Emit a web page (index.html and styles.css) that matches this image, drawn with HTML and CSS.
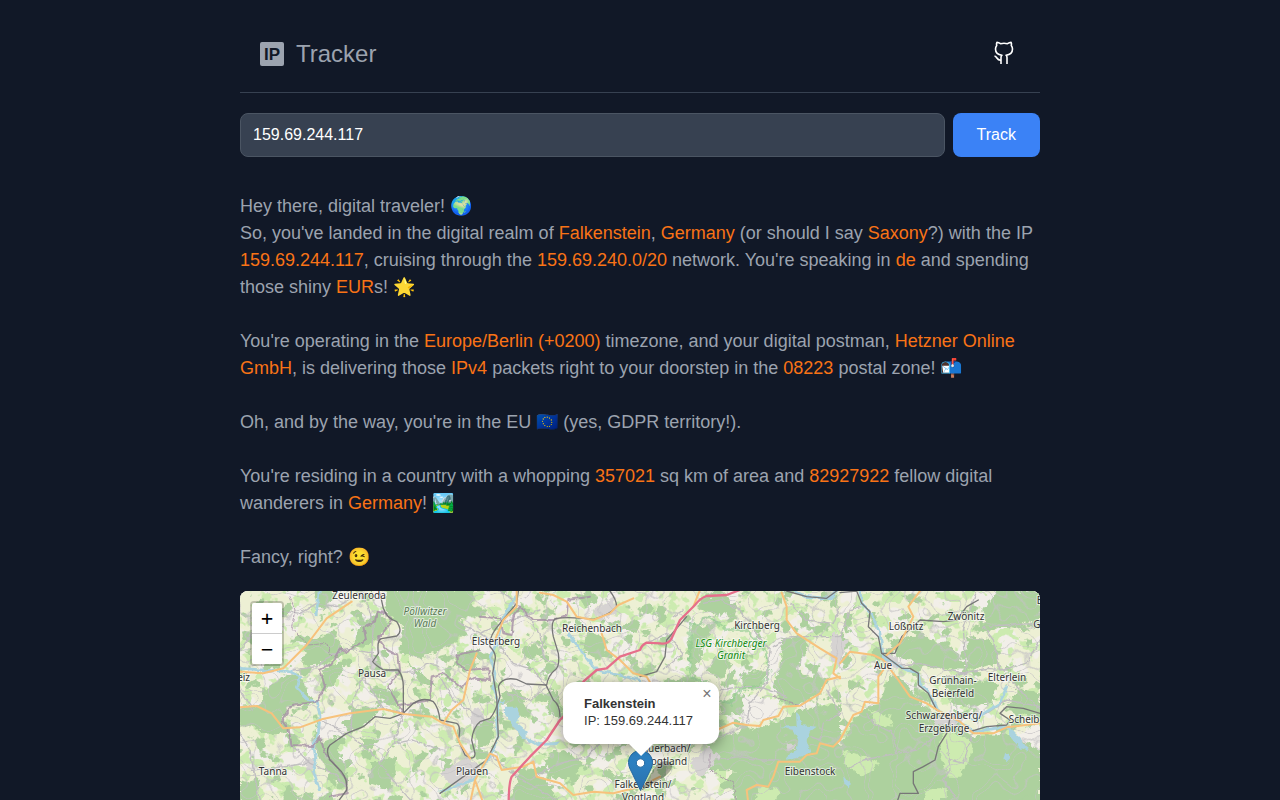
FILE: index.html
```
<!DOCTYPE html>
<html lang="en">

<head>
    <meta charset="UTF-8">
    <meta name="viewport" content="width=device-width, initial-scale=1.0">
    <title>IP Tracker</title>
    <link rel="stylesheet" href="styles.css">
</head>

<body>
    <div class="container">
        <header class="header">
            <h1 class="brand">
                <svg class="brand-icon" viewBox="0 0 24 24" role="img" aria-label="IP">
                    <rect width="24" height="24" rx="2" />
                    <text x="12" y="18">IP</text>
                </svg>
                Tracker
            </h1>
            <a class="github" href="#" aria-label="GitHub">
                <svg viewBox="0 0 24 24">
                    <path d="M9 23v-6.500c0-1 .4-1.800 1-2.300-4.500-.4-6.500-2.500-6.500-6.200 0-1.500.5-2.700 1.200-3.600-.3-1-.3-2.100.2-3 1.500.1 2.700.7 3.600 1.300 2.300-.5 4.700-.5 7 0 .9-.6 2.100-1.200 3.600-1.300.5.9.5 2 .2 3 .7.9 1.200 2.100 1.200 3.600 0 3.700-2 5.800-6.500 6.200.6.5 1 1.300 1 2.300V23M9 19.200c-4.500.6-3.500-3.700-6.500-4.200" />
                </svg>
            </a>
        </header>

        <form class="search">
            <input type="text" class="search-input" value="159.69.244.117" aria-label="IP address">
            <button type="button" class="search-button">Track</button>
        </form>

        <div class="story">
            <p>Hey there, digital traveler! 🌍<br>
                So, you've landed in the digital realm of <span>Falkenstein</span>, <span>Germany</span> (or should I say <span>Saxony</span>?) with the IP <span>159.69.244.117</span>, cruising through the <span>159.69.240.0/20</span> network. You're speaking in <span>de</span> and spending those shiny <span>EUR</span>s! 🌟</p>
            <p>You're operating in the <span>Europe/Berlin (+0200)</span> timezone, and your digital postman, <span>Hetzner Online GmbH</span>, is delivering those <span>IPv4</span> packets right to your doorstep in the <span>08223</span> postal zone! 📬</p>
            <p>Oh, and by the way, you're in the EU 🇪🇺 (yes, GDPR territory!).</p>
            <p>You're residing in a country with a whopping <span>357021</span> sq km of area and <span>82927922</span> fellow digital wanderers in <span>Germany</span>! 🏞️</p>
            <p>Fancy, right? 😉</p>
        </div>

        <div class="map">
            <svg class="map-tiles" viewBox="0 0 800 400" preserveAspectRatio="xMidYMid slice">
                <defs>
                    <filter id="fields" x="0" y="0" width="100%" height="100%" color-interpolation-filters="sRGB">
                        <feTurbulence type="fractalNoise" baseFrequency="0.045" numOctaves="3" seed="8" />
                        <feColorMatrix values="0 0 0 0 .93  0 0 0 0 .94  0 0 0 0 .83  16 0 0 0 -6.6" />
                    </filter>
                    <filter id="meadows" x="0" y="0" width="100%" height="100%" color-interpolation-filters="sRGB">
                        <feTurbulence type="fractalNoise" baseFrequency="0.08" numOctaves="3" seed="21" />
                        <feColorMatrix values="0 0 0 0 .80  0 0 0 0 .92  0 0 0 0 .69  0 14 0 0 -7.8" />
                    </filter>
                    <filter id="groves" x="0" y="0" width="100%" height="100%" color-interpolation-filters="sRGB">
                        <feTurbulence type="fractalNoise" baseFrequency="0.07" numOctaves="4" seed="33" />
                        <feColorMatrix values="0 0 0 0 .68  0 0 0 0 .82  0 0 0 0 .62  0 0 18 0 -10.8" />
                    </filter>
                    <filter id="lanes" x="0" y="0" width="100%" height="100%" color-interpolation-filters="sRGB">
                        <feTurbulence type="fractalNoise" baseFrequency="0.035" numOctaves="2" seed="5" />
                        <feColorMatrix values="0 0 0 0 .77  0 0 0 0 .76  0 0 0 0 .77  1 0 0 0 0" />
                        <feComponentTransfer>
                            <feFuncA type="table" tableValues="0 0 0 0 0 0 0 0 0 0 0 0 0 0 0 0 0 0 0 0 0 0 0 .7 0 0 0 0 0 0 .7 0 0 0 0 0 0 0 0 0 0 0 0 0 0 0 0 0 0 0 0 0 0" />
                        </feComponentTransfer>
                    </filter>
                    <filter id="rough" x="-5%" y="-5%" width="110%" height="110%" color-interpolation-filters="sRGB">
                        <feTurbulence type="fractalNoise" baseFrequency="0.06" numOctaves="3" seed="3" />
                        <feDisplacementMap in="SourceGraphic" scale="24" xChannelSelector="R" yChannelSelector="G" />
                    </filter>
                    <filter id="wobble" x="-5%" y="-5%" width="110%" height="110%" color-interpolation-filters="sRGB">
                        <feTurbulence type="fractalNoise" baseFrequency="0.06" numOctaves="2" seed="11" />
                        <feDisplacementMap in="SourceGraphic" scale="12" xChannelSelector="R" yChannelSelector="G" />
                    </filter>
                    <linearGradient id="pin" x1="0" y1="0" x2="0" y2="1">
                        <stop offset="0" stop-color="#2e86c9" />
                        <stop offset="1" stop-color="#2a72ad" />
                    </linearGradient>
                </defs>

                <!-- land cover -->
                <rect class="land" width="800" height="400" />
                <rect width="800" height="400" filter="url(#fields)" />
                <rect width="800" height="400" filter="url(#meadows)" />
                <rect width="800" height="400" filter="url(#groves)" />

                <g transform="translate(0 -1) scale(.333333)">
                    <g class="sand" filter="url(#rough)">
                        <path d="M240 370L330 360L400 400L240 450L230 420ZM800 210L860 230L900 270L860 310L790 280ZM1500 310L1620 330L1600 390L1500 400ZM2330 430L2400 400V500L2350 470ZM1590 170L1630 160L1610 240L1570 290Z" />
                    </g>
                    <g class="forest" filter="url(#rough)">
                        <path d="M85 290L130 260L175 250L195 290L225 340L150 350L125 390L145 420L100 435L0 400V350L60 345Z" />
                        <path d="M200 150L270 130L305 165L310 195L260 220L185 230ZM230 3H290L260 60L235 50ZM250 240L330 200L280 290L240 310Z" />
                        <path d="M370 100L410 65L450 100L410 150L330 180ZM440 0H700V70L640 100L600 180L540 205L480 190L490 110L440 70Z" />
                        <path d="M220 470L290 440L300 500L330 580L300 600L250 520ZM300 400L390 350L420 360L350 430ZM360 440L420 450L380 490ZM390 520L470 500L450 600L390 580ZM500 210L590 290L540 280ZM420 290L480 310L470 350L420 330ZM0 570L50 590L60 640H0Z" />
                        <path d="M600 100L670 90L680 130L630 165L600 180ZM650 190L720 175L700 230L640 230ZM840 180L890 160L910 190L860 210ZM700 400L765 380L760 450L715 480ZM780 310L840 300L870 380L820 380ZM910 310L950 300L970 390L930 370Z" />
                        <path d="M910 505L970 480L1030 520L1000 560L940 570ZM1040 120L1100 150L1080 210L1030 180ZM1120 110L1200 90L1190 130ZM1080 540L1170 560L1120 580ZM840 530L920 570L960 640H810ZM1010 10L1070 20L1040 60Z" />
                        <path d="M1380 30L1450 10L1490 50L1430 80L1390 60ZM1360 100L1410 120L1390 180L1360 260L1345 200ZM1430 200L1480 220L1440 270L1400 240ZM1500 250L1580 240L1560 290L1510 300Z" />
                        <path d="M1630 145L1680 135L1705 170L1670 240L1730 270L1770 260L1740 310L1680 345L1620 335L1600 280L1620 240Z" />
                        <path d="M1440 340L1510 310V370L1450 375ZM1440 440L1520 420L1630 390L1680 360L1800 340V640H1480V540L1410 540L1400 480Z" />
                        <path d="M2270 0L2400 3V90L2240 120L2230 60ZM1950 150L2060 140L2140 180L2190 240L2080 235L1970 200ZM2180 140L2250 150L2280 220L2180 240Z" />
                        <path d="M1950 250L2000 280L2050 350L2110 380L2200 440L2300 430L2400 480V640H1800V470L1860 360L1920 340ZM2110 260L2270 280L2260 340L2140 350ZM2330 300L2400 310V390L2300 360Z" />
                        <path d="M1780 900L2400 600V1260H1500V620ZM100 760L500 700L620 900L300 1000ZM700 800L1100 760L1200 1100L800 1200Z" />
                    </g>

                    <!-- clearings in the Erzgebirge forests -->
                    <g class="clearing" filter="url(#rough)">
                        <path d="M2110 420L2190 450L2200 490L2160 560L2120 560L2100 480ZM1810 480L1880 500L1920 520L1870 560L1810 520ZM1890 360L1950 380L1960 410L1900 400ZM2060 600L2120 590L2120 630H2050ZM1560 590L1620 600L1600 640H1540Z" />
                    </g>
                    <g class="built" filter="url(#rough)">
                        <path d="M690 370L720 350L730 390L700 420ZM600 550L680 500L730 540L650 600ZM1060 60L1120 20L1130 70L1080 90ZM1780 130L1820 150L1800 240L1770 200ZM1930 190L1970 200L1990 240L1950 230ZM2070 390L2150 370L2170 400L2100 410ZM390 180L410 210L400 240L385 220ZM195 500L225 510L220 545L195 530ZM1400 470L1440 500L1380 560L1350 520ZM1640 460L1670 465L1665 480L1640 480Z" />
                    </g>
                </g>

                <rect width="800" height="400" filter="url(#lanes)" />

                <g class="lines" transform="translate(0 -1) scale(.333333)">
                    <!-- Kirchberger Granit reserve outline -->
                    <path class="reserve" filter="url(#rough)" d="M1350 100Q1380 110 1390 90T1460 120L1510 115L1570 170L1590 250L1560 290L1500 300L1470 340L1430 330L1400 280L1350 260Z" />

                    <g class="minor" filter="url(#wobble)">
                        <path d="M0 180L30 140L60 80L110 60L180 70L230 40L290 50L330 30" />
                        <path d="M0 300L40 360M0 430L30 480L40 540L60 640M160 240L230 230L260 205L320 175L400 190" />
                        <path d="M360 10L385 50L400 100L395 200L430 240L480 240M450 240L520 250L560 220L600 230M370 260L340 330L332 430M370 260L430 355L490 370" />
                        <path d="M150 460L210 520L280 550L320 590M200 520L30 545M245 390L330 440L390 480L450 560L520 640M460 460L520 450L600 480M490 370L460 460L420 520" />
                        <path d="M720 130L780 170L820 220L880 240L920 290M660 100L720 130L810 90L900 60M920 290L870 330L800 310M780 0L840 50L900 130L910 200L980 240" />
                        <path d="M880 560L960 520L1040 500L1100 440L1180 460M760 500L830 560L900 600L960 640M600 260L640 330L700 370L760 400M1000 280L1060 320L1130 360" />
                        <path d="M1220 160L1280 130L1330 190L1270 240M1300 80L1330 60M1390 40L1440 30L1500 60L1540 120L1590 180L1580 280L1530 340L1520 400" />
                        <path d="M1440 300L1500 290L1560 290L1640 320M1430 510L1500 500L1560 510L1620 510M1300 480L1360 460L1440 440L1520 405M1650 40L1700 90L1780 100L1800 50" />
                        <path d="M1600 170L1640 145L1680 140L1800 140M1800 140L1830 60L1860 50M1760 300L1800 370L1750 400L1740 450L1710 440" />
                        <path d="M1980 225L2040 220L2120 240L2180 250L2170 120L2190 60L2210 3M2230 110L2300 105L2400 100M2230 110L2260 150L2280 240L2360 220L2400 150M2300 260L2340 300L2400 360" />
                        <path d="M2180 250L2120 260L2240 235L2300 240M1880 370L1900 400L1960 430L1970 490L2030 480L2100 430M1970 490L1870 510L1820 540M2120 450L2130 540L2110 570L2160 640M2200 420L2170 520L2130 510M2100 380L2240 370L2300 330L2400 350" />
                    </g>

                    <g class="water" filter="url(#wobble)">
                        <path class="river" d="M238 3L228 75M0 235L70 240L150 245L180 260L172 295L205 330L232 335L240 380L235 430L220 460L228 510L220 540L238 600M830 20L790 80L770 160L750 200L765 250L760 290L775 330L770 400L775 440L750 500L700 570L600 605M985 130L1030 190L1070 240L1200 270M1655 0L1700 20L1770 25L1790 3" />
                        <path class="river" d="M1860 3L1865 40L1895 75L1920 130L1930 200L2000 240L2035 250L2040 280L2070 310L2090 360L2140 385L2200 425L2300 410L2340 450L2360 480M2200 390L2280 340L2300 290" />
                        <path class="lake" d="M795 350L830 350L840 380L830 400L860 425L860 445L900 460L960 455L950 465L890 468L850 445L820 410L795 370ZM775 335L795 330L790 345Z" />
                        <path class="lake" d="M1668 365L1680 385L1685 405L1730 410L1710 425L1700 450L1712 490L1680 500L1640 512L1650 490L1670 480L1675 450L1660 420L1620 410L1670 408Z" />
                        <path class="lake" d="M2295 490L2310 488L2310 505L2300 516L2290 510ZM1810 560L1832 580L1830 595L1812 580ZM2300 415L2330 440L2360 480L2340 475L2310 440Z" />
                    </g>

                    <!-- state borders -->
                    <g class="border" filter="url(#wobble)">
                        <path d="M410 65L440 70L455 95L415 145L440 180L475 195L480 240L445 290L475 345L490 370M410 65L405 95L370 110L378 150L315 185L300 175L275 220L240 240L255 290L230 335L155 345L125 390L145 420L155 465L220 468L240 440L255 490L290 530L320 570L320 610L270 620" />
                        <path d="M475 345L520 340L570 330L575 260L610 250L665 295L690 265L750 270L745 235L680 240L650 220L650 195L720 180M720 80L780 85L790 130L815 135L820 80L840 50L880 90L940 90L980 75L985 30L1050 20" />
                        <path class="thin" d="M150 20L165 60L155 110L190 150L205 165L260 160L275 200M1600 320L1680 345L1690 350M1410 490L1410 540L1480 580L1490 640" />
                    </g>

                    <g class="rail">
                        <path d="M420 10L430 55Q440 85 470 95Q490 125 470 138L425 146Q410 150 415 190L398 215Q405 225 430 240L475 240Q490 260 490 290V370L450 385L405 380L370 410L320 430L270 465Q255 480 270 510L290 530Q325 560 320 600L290 640" />
                        <path d="M490 370L520 340Q550 320 580 335Q595 350 600 390L650 400Q665 410 655 450L675 495Q705 515 705 490L695 450Q700 410 720 395L750 385Q765 370 780 320L775 290Q785 260 830 268L860 282L920 285Q925 255 945 240Q960 230 955 190L940 140Q930 90 950 85Q990 80 1060 88Q1110 75 1130 50Q1130 30 1110 3" />
                        <path d="M918 285L940 330Q960 345 960 380M835 3L830 40L780 100Q745 140 750 170Q770 190 765 210L758 250L770 320L775 440L740 510L600 610" />
                        <path d="M1200 260L1250 245L1275 200L1280 150L1340 80M1640 3L1700 20L1760 25L1790 3M1800 8L1850 3L1865 40L1890 65L1885 110L1915 140L1925 190L1965 190L1985 140L2040 90L2110 95L2150 90L2180 50L2215 30" />
                        <path d="M1925 190L1985 235L2010 235L2035 250L2035 285L2065 310L2090 360L2130 385L2120 430L2095 470L2085 510L2050 530L2020 545L2020 580L2035 610L1980 610L1970 640M2190 425L2240 410L2300 405L2310 390L2280 370L2300 350L2350 355L2400 370" />
                    </g>

                    <g class="road">
                        <path d="M335 35L260 85L200 165L155 210L130 235L70 250L0 245M0 352L50 348L95 370L130 415L180 412L245 388L330 370L430 357L492 372L575 380L610 400L640 410L660 460L690 505M610 400L635 360L670 330L690 240L710 190" />
                        <path d="M830 3L830 50L790 90L765 150M900 8L940 15L980 35L1010 80L1060 90L1110 70L1135 45L1180 25M1085 130L1100 180L1140 210L1180 250L1220 260L1250 310" />
                        <path d="M690 640L705 570L750 490L770 500L785 540L850 530L880 515L890 560L960 580L1000 615L1060 605L1120 610L1200 590L1260 560M705 570L730 640" />
                        <path d="M1380 0L1360 50M1430 420L1480 398L1520 405L1560 408L1570 390L1615 378L1630 350L1680 347L1740 310L1760 270L1800 260M1625 8L1640 50L1640 90L1670 130L1740 175L1790 205L1780 250L1800 265" />
                        <path d="M1800 220L1830 185L1900 195L1930 210L1975 270L2010 320L2060 340L2100 365L2160 395L2200 430L2260 430L2300 412L2400 400M2040 3L2005 50L2020 80L1980 160L1940 195M1930 240L1915 260V340L1875 335L1865 365L1840 375L1800 450" />
                        <path d="M1800 450L1780 470L1740 460L1730 490L1700 495L1680 515L1615 515L1600 560L1585 590L1550 585L1520 600L1525 640" />
                    </g>

                    <path class="motorway" d="M1500 0L1460 15L1400 18Q1380 25 1365 45L1320 90L1295 145Q1285 165 1260 160L1220 158Q1205 165 1200 180L1140 200L1100 235L1070 240L1030 275Q1005 310 1000 350L960 390L920 450L870 500L815 560Q805 580 806 660" />
                </g>

                <g class="labels">
                    <text x="119" y="8">Zeulenroda</text>
                    <text class="nature muted" x="185" y="24">Pöllwitzer<tspan x="185" dy="12">Wald</tspan></text>
                    <text x="256" y="54">Elsterberg</text>
                    <text x="352" y="41">Reichenbach</text>
                    <text x="132" y="86">Pausa</text>
                    <text x="-2" y="90">Greiz</text>
                    <text x="33" y="184">Tanna</text>
                    <text x="232" y="184">Plauen</text>
                    <text x="517" y="38">Kirchberg</text>
                    <text class="nature" x="491" y="56">LSG Kirchberger<tspan x="491" dy="12">Granit</tspan></text>
                    <text x="426" y="161">Auerbach/<tspan x="426" dy="13">Vogtland</tspan></text>
                    <text x="403" y="197">Falkenstein/<tspan x="403" dy="13">Vogtland</tspan></text>
                    <text x="570" y="184">Eibenstock</text>
                    <text x="666" y="39">Lößnitz</text>
                    <text x="726" y="29">Zwönitz</text>
                    <text x="643" y="78">Aue</text>
                    <text x="713" y="93">Grünhain-<tspan x="713" dy="13">Beierfeld</tspan></text>
                    <text x="767" y="90">Elterlein</text>
                    <text x="704" y="128">Schwarzenberg/<tspan x="704" dy="13">Erzgebirge</tspan></text>
                    <text x="801" y="132">Scheibenberg</text>
                    <text x="830" y="13">Ehrenfrieders.</text>
                    <text x="807" y="37">Geyer</text>
                </g>
            </svg>

            <div class="zoom">
                <button type="button" aria-label="Zoom in">+</button>
                <button type="button" aria-label="Zoom out">−</button>
            </div>

            <svg class="marker" viewBox="0 0 50 41">
                <path class="marker-shadow" d="M13 41L25 20Q32 8 42 12Q48 18 36 27Z" />
                <path class="marker-pin" fill="url(#pin)" d="M12.500 .5C6 .5.5 5.800.5 12.500c0 3 1.200 6 2.700 8.700L12.500 40.500l9.300-19.300c1.500-2.700 2.700-5.700 2.700-8.700C24.500 5.800 19 .5 12.500.5Z" />
                <circle cx="12.500" cy="13" r="4.200" />
            </svg>

            <div class="popup">
                <div class="popup-content">
                    <b>Falkenstein</b><br>IP: 159.69.244.117
                </div>
                <button type="button" class="popup-close" aria-label="Close popup">×</button>
            </div>
        </div>
    </div>
</body>

</html>
```
FILE: styles.css
```
* {
    box-sizing: border-box;
}

body {
    margin: 0;
    background-color: #111827;
    color: #9ca3af;
    font-family: "Liberation Sans", Arial, sans-serif;
    font-size: 16px;
}

.container {
    max-width: 800px;
    margin: 0 auto;
    padding-top: 16px;
}

/* Header */
.header {
    display: flex;
    justify-content: space-between;
    align-items: center;
    padding: 20px 24px 20px 20px;
    border-bottom: 1px solid #374151;
}

.brand {
    display: flex;
    align-items: center;
    gap: 12px;
    margin: 0;
    font-size: 24px;
    font-weight: normal;
    line-height: 36px;
}

.brand-icon {
    width: 24px;
    height: 24px;
    fill: #9ca3af;
}

.brand-icon text {
    fill: #111827;
    font-size: 17px;
    font-weight: bold;
    text-anchor: middle;
}

.github {
    display: flex;
}

.github svg {
    width: 24px;
    height: 24px;
    margin-bottom: 2px;
    fill: none;
    stroke: #fff;
    stroke-width: 1.6;
    stroke-linejoin: round;
}

/* Search form */
.search {
    display: flex;
    gap: 8px;
    margin: 20px 0 36px;
}

.search-input {
    flex: 1;
    min-width: 0;
    height: 44px;
    padding: 0 12px;
    border: 1px solid #4b5563;
    border-radius: 8px;
    background-color: #374151;
    color: #fff;
    font: inherit;
}

.search-button {
    padding: 0 24px;
    border: none;
    border-radius: 8px;
    background-color: #3b82f6;
    color: #fff;
    font: inherit;
    cursor: pointer;
}

/* Story text */
.story {
    margin-bottom: 20px;
    font-size: 18px;
    line-height: 27px;
}

.story p {
    margin: 0 0 27px;
}

.story p:last-child {
    margin-bottom: 0;
}

.story span {
    color: #f97316;
}

/* Map */
.map {
    position: relative;
    height: 400px;
    overflow: hidden;
    border-radius: 8px;
    background-color: #f2efe9;
}

.map-tiles {
    display: block;
    width: 100%;
    height: 100%;
}

.land {
    fill: #f2efe9;
}

.forest {
    fill: #add19e;
}

.clearing {
    fill: #cdebb0;
}

.built {
    fill: #d6d3d2;
}

.sand {
    fill: #f2efe9;
}

.lines {
    fill: none;
    stroke-linejoin: round;
    stroke-linecap: round;
}

.reserve {
    stroke: #8fcb8f;
    stroke-width: 9;
    opacity: .6;
}

.minor {
    stroke: #c0bec0;
    stroke-width: 4;
}

.river {
    stroke: #aad3df;
    stroke-width: 8;
}

.lake {
    fill: #aad3df;
}

.border {
    stroke: #a58fa5;
    stroke-width: 6;
    opacity: .8;
}

.thin {
    stroke-width: 3;
    stroke-dasharray: 12 5;
}

.rail {
    stroke: #777;
    stroke-width: 4;
}

.road {
    stroke: #f7c27c;
    stroke-width: 6;
}

.motorway {
    stroke: #e66f8b;
    stroke-width: 7;
}

.labels {
    fill: #333;
    stroke: #fff;
    stroke-opacity: .6;
    stroke-width: 2;
    stroke-linejoin: round;
    paint-order: stroke;
    font-family: "Noto Sans", sans-serif;
    font-size: 10px;
    text-anchor: middle;
}

.nature {
    fill: #128a12;
    font-style: italic;
}

.muted {
    fill: #5a7a55;
}

.zoom {
    position: absolute;
    top: 10px;
    left: 10px;
    display: flex;
    flex-direction: column;
    border: 2px solid rgba(0, 0, 0, .2);
    border-radius: 4px;
    background-clip: padding-box;
}

.zoom button {
    width: 30px;
    height: 30px;
    padding: 0;
    border: none;
    border-radius: 0 0 2px 2px;
    background-color: #fff;
    color: #000;
    font: 20px/30px "DejaVu Sans Mono", monospace;
    cursor: pointer;
}

.zoom button:first-child {
    height: 31px;
    border-bottom: 1px solid #ccc;
    border-radius: 2px 2px 0 0;
}

.marker {
    position: absolute;
    left: calc(50% - 12px);
    bottom: 200px;
    width: 50px;
    height: 41px;
}

.marker-pin {
    stroke: #2569a0;
}

.marker-shadow {
    fill: #000;
    opacity: .3;
}

.marker circle {
    fill: #fff;
    stroke: #2569a0;
}

.popup {
    position: absolute;
    left: calc(50% + 1px);
    bottom: 247px;
    transform: translateX(-50%);
    border-radius: 12px;
    background-color: #fff;
    color: #333;
    box-shadow: 0 3px 14px rgba(0, 0, 0, .4);
}

/* Popup tip */
.popup::after {
    content: "";
    position: absolute;
    top: 100%;
    left: calc(50% - 12px);
    border: 12px solid transparent;
    border-top-color: #fff;
    border-bottom: none;
}

.popup-content {
    padding: 13px 26px 15px 21px;
    font-size: 13px;
    line-height: 17px;
    white-space: nowrap;
}

.popup-close {
    position: absolute;
    top: 0;
    right: 0;
    width: 24px;
    height: 24px;
    padding: 0;
    border: none;
    background: none;
    color: #757575;
    font: 16px/24px "Liberation Sans", sans-serif;
    cursor: pointer;
}
```
